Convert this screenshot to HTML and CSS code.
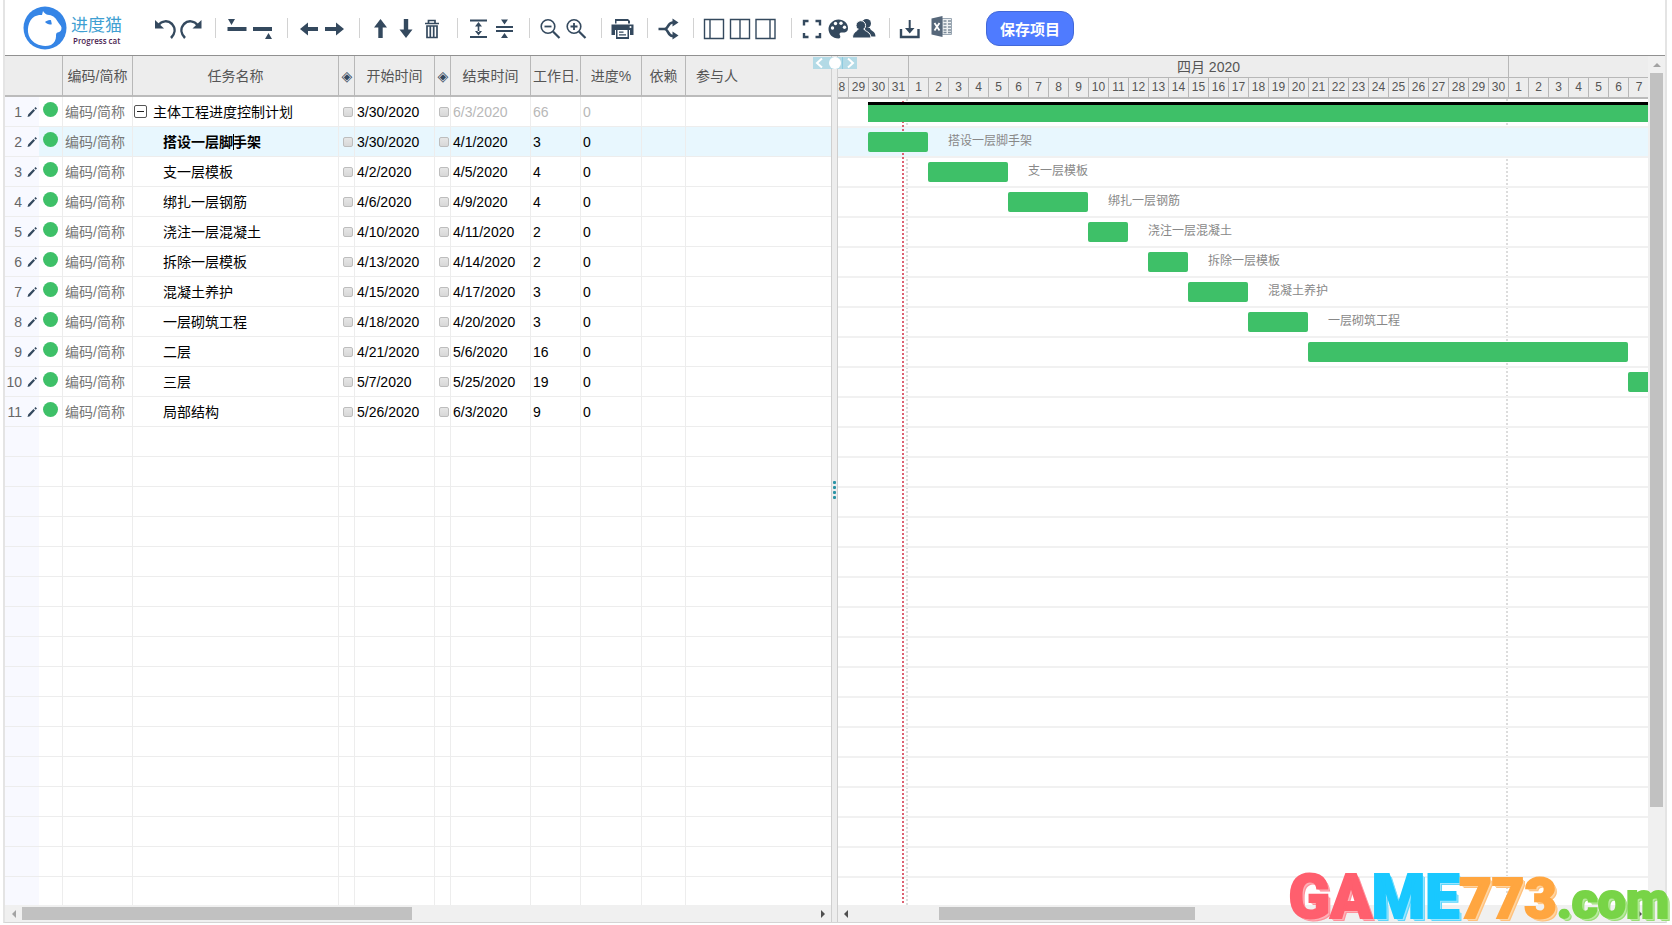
FILE: index.html
```html
<!DOCTYPE html>
<html lang="zh-CN">
<head>
<meta charset="utf-8">
<title>进度猫</title>
<link rel="stylesheet" href="styles.css">
</head>
<body>
<div class="app">
  <header class="toolbar">
    <a class="brand" href="#">
      <svg class="brand-mark" viewBox="0 0 44 44" aria-hidden="true">
        <circle cx="22" cy="22" r="21.5" fill="#3585e6"/>
        <path d="M20 5c1 1.500 2.500 3.200 4.500 3.800c4.500.3 8 2.500 9.800 6.200c1 2.200 3.700 4 4.200 6.500c.3 3-1.500 4.500-4 5c-1.500.5-1.500 2-1.500 4c0 3-1.500 6.500-5 8.500c-8 2.500-17-.5-21-7C3 25 5 14.500 11.500 10.500c2-1.200 5-1.800 7.500-1.500z" fill="#fff"/>
        <path d="M22 16c1.500-1 3.500-2.300 6-1.800l.8 4c-2.500.6-5 0-6.800-2.200z" fill="#3585e6"/>
      </svg>
      <span class="brand-words"><span class="brand-name">进度猫</span><span class="brand-sub">Progress cat</span></span>
    </a>
    <div class="group">
      <button class="tool" aria-label="撤销"><svg viewBox="0 0 26 26"><path d="M6 10.500C10 5.500 16 5 20 9c4 4.500 3 10-1 14" fill="none" stroke="#34495e" stroke-width="2.500"/><path d="M3 5v8.500h9z"/></svg></button>
      <button class="tool" aria-label="重做"><svg viewBox="0 0 26 26"><path d="M20 10.500C16 5.500 10 5 6 9c-4 4.500-3 10 1 14" fill="none" stroke="#34495e" stroke-width="2.500"/><path d="M23.500 5v8.500h-9z"/></svg></button>
    </div>
    <div class="group">
      <button class="tool" aria-label="在上方插入"><svg viewBox="0 0 26 26"><path d="M3.500 12h19v4h-19zM4 4h7l-3.500 6z"/></svg></button>
      <button class="tool" aria-label="在下方插入"><svg viewBox="0 0 26 26"><path d="M3 12h19v4H3zM15 24h7l-3.500-6z"/></svg></button>
    </div>
    <div class="group">
      <button class="tool" aria-label="升级"><svg viewBox="0 0 26 26"><path d="M4 14l8-6.500V12h10v4H12v4.500z"/></svg></button>
      <button class="tool" aria-label="降级"><svg viewBox="0 0 26 26"><path d="M22 14l-8-6.500V12H3v4h11v4.500z"/></svg></button>
    </div>
    <div class="group">
      <button class="tool" aria-label="上移"><svg viewBox="0 0 26 26"><path d="M12.500 4l6.500 8.500h-4.300V23h-4.400V12.500H6z"/></svg></button>
      <button class="tool" aria-label="下移"><svg viewBox="0 0 26 26"><path d="M12 23l6.500-8.500h-4.300V4H9.800v10.500H5.500z"/></svg></button>
      <button class="tool" aria-label="删除"><svg viewBox="0 0 26 26"><path d="M5 8.500h14M8.500 8V5.500h6.500V8M7 11v11.500h10V11zM10.300 11v11M13.700 11v11" fill="none" stroke="#34495e" stroke-width="1.700"/></svg></button>
    </div>
    <div class="group">
      <button class="tool" aria-label="展开"><svg viewBox="0 0 26 26"><path d="M4 4.500h17v2H4zM4 21h17v2H4zM12.500 7l3.500 4.500H9zM12.500 20.500L16 16H9zM11.700 11h1.600v6h-1.600z"/></svg></button>
      <button class="tool" aria-label="折叠"><svg viewBox="0 0 26 26"><path d="M4 11h17v2H4zM4 15h17v2H4zM9 4.500h7l-3.500 5zM9 23h7l-3.500-5z"/></svg></button>
    </div>
    <div class="group">
      <button class="tool" aria-label="缩小"><svg viewBox="0 0 26 26"><g fill="none" stroke="#34495e"><circle cx="10" cy="11.500" r="6.800" stroke-width="1.600"/><path d="M15 16.500L21.500 23" stroke-width="2.200"/><path d="M6.500 11.500h7" stroke-width="1.800"/></g></svg></button>
      <button class="tool" aria-label="放大"><svg viewBox="0 0 26 26"><g fill="none" stroke="#34495e"><circle cx="10" cy="11.500" r="6.800" stroke-width="1.600"/><path d="M15 16.500L21.500 23" stroke-width="2.200"/><path d="M6.500 11.500h7M10 8v7" stroke-width="1.800"/></g></svg></button>
    </div>
    <div class="group">
      <button class="tool" aria-label="打印"><svg viewBox="0 0 26 26"><path d="M5 4h13l2 2v2.500h-2V6H6.500v2.500H5zM1.500 9.500h22V20h-3.500v-5H5v5H1.500zM6 14.500h13V24H6z"/><path d="M7.500 15h10v7h-10z" fill="#fff"/><path d="M9 16.500h4.500v1.300H9zM9 19.300h7v1.300H9z"/><circle cx="20.500" cy="12" r="1" fill="#fff"/></svg></button>
    </div>
    <div class="group">
      <button class="tool" aria-label="依赖关系"><svg viewBox="0 0 26 26"><path d="M2.500 14h6c4 0 3-6 8-6.500h2M8.500 14c4 0 3 6.500 8 7h2" fill="none" stroke="#34495e" stroke-width="2.600"/><path d="M16.500 3.500l6 4-6 4zM16.500 16.500l6 4-6 4z"/></svg></button>
    </div>
    <div class="group">
      <button class="tool" aria-label="左栏"><svg viewBox="0 0 26 26"><path d="M2.500 4.500h19v19h-19zM8 4.500v19" fill="none" stroke="#34495e" stroke-width="1.400"/></svg></button>
      <button class="tool" aria-label="中栏"><svg viewBox="0 0 26 26"><path d="M2.500 4.500h19v19h-19zM12 4.500v19" fill="none" stroke="#34495e" stroke-width="1.400"/></svg></button>
      <button class="tool" aria-label="右栏"><svg viewBox="0 0 26 26"><path d="M2 4.500h19v19H2zM16 4.500v19" fill="none" stroke="#34495e" stroke-width="1.400"/></svg></button>
    </div>
    <div class="group">
      <button class="tool" aria-label="全屏"><svg viewBox="0 0 26 26"><path d="M4 10.500V6h4.500M15.500 6H20v4.500M20 18v4h-4.500M8.500 22H4v-4" fill="none" stroke="#34495e" stroke-width="2.400"/></svg></button>
      <button class="tool" aria-label="配色"><svg viewBox="0 0 26 26"><path d="M12.500 4.500c5.500 0 9.500 4 9.500 8.500c0 4-3 5-5.500 4.500c-3-.5-3.500 1-2.500 3c.7 1.500.3 3-1.500 3C6.500 23.500 2.500 19 2.500 14s4.500-9.500 10-9.500z"/><g fill="#fff"><circle cx="6.500" cy="13" r="1.700"/><circle cx="9.500" cy="8.500" r="1.700"/><circle cx="15" cy="8.300" r="1.700"/><circle cx="18.500" cy="12.200" r="1.700"/></g></svg></button>
      <button class="tool" aria-label="成员"><svg viewBox="0 0 26 26"><circle cx="14.500" cy="8.500" r="4.500"/><path d="M13 13h5c0 3 5.500 2.500 5.500 8.500H14z"/><g stroke="#fff"><circle cx="8.800" cy="10.500" r="4.800"/><path d="M6 14h6c.5 2.500 7 2.500 7 9H.5c0-6.500 5-6.500 5.500-9z"/></g><path d="M6.500 13h5v3h-5z"/></svg></button>
    </div>
    <div class="group">
      <button class="tool" aria-label="下载"><svg viewBox="0 0 26 26"><path d="M3 14v8h17.500v-8" fill="none" stroke="#34495e" stroke-width="2.400"/><path d="M10.700 5h2v8h3.800l-4.800 5.500L7 13h3.700z"/></svg></button>
      <button class="tool tool-excel" aria-label="导出 Excel"><svg viewBox="0 0 26 26"><path d="M12 3.500h9.500v16H12z" fill="#edf0f2" stroke="#9aa7b3" stroke-width="1"/><path d="M13.500 6h3M18 6h3M13.500 9h3M18 9h3M13.500 12h3M18 12h3M13.500 15h3M18 15h3M13.500 17.500h3M18 17.500h3" stroke="#7d8c9b" stroke-width="1.400"/><path d="M1.500 3.500l11-2.500v21l-11-2.500z" fill="#56677a"/><path d="M4.500 8l5 7.500M9.500 8l-5 7.500" stroke="#fff" stroke-width="1.800"/></svg></button>
    </div>
    <button class="save">保存项目</button>
  </header>

  <main class="workspace">
    <section class="pane pane-grid">
      <div class="pane-view">
        <table class="tasks">
          <colgroup><col class="c-index"><col class="c-dot"><col class="c-code"><col class="c-name"><col class="c-mark"><col class="c-date"><col class="c-mark"><col class="c-date"><col class="c-days"><col class="c-progress"><col class="c-dep"><col></colgroup>
          <thead>
            <tr><th colspan="2"></th><th>编码/简称</th><th>任务名称</th><th class="mark">◈</th><th>开始时间</th><th class="mark">◈</th><th>结束时间</th><th class="tight">工作日.</th><th>进度%</th><th>依赖</th><th class="people">参与人</th></tr>
          </thead>
          <tbody id="task-rows"></tbody>
        </table>
      </div>
      <div class="hscroll"><i class="arrow left dim"></i><div class="track"><div class="thumb thumb-grid"></div></div><i class="arrow right"></i></div>
    </section>

    <div class="splitter">
      <div class="handle">
        <svg viewBox="0 0 44 12"><path d="M0 0h44v12H0z" fill="#b3dae6"/><path d="M29.500 0v12" stroke="#8ecbe0"/><path d="M9 1.500L4 6l5 4.500M35 1.500L40 6l-5 4.500" fill="none" stroke="#fff" stroke-width="2"/><circle cx="22" cy="6" r="6" fill="#fff"/></svg>
      </div>
      <div class="grip"><i></i><i></i><i></i><i></i></div>
    </div>

    <section class="pane pane-chart">
      <div class="chart-main">
        <div class="pane-view">
          <div class="scale">
            <div class="months"><span class="m-mar"></span><span class="m-apr">四月 2020</span><span class="m-may"></span></div>
            <div class="days" id="days"></div>
          </div>
          <div class="canvas">
            <div class="marker month" style="--day:4"></div>
            <div class="marker month" style="--day:34"></div>
            <div class="marker today"></div>
            <div class="lanes" id="lanes"></div>
          </div>
        </div>
        <div class="vscroll"><i class="arrow up dim"></i><div class="vtrack"><div class="vthumb"></div></div><i class="arrow down"></i></div>
      </div>
      <div class="hscroll hscroll-chart"><i class="arrow left"></i><div class="track"><div class="thumb thumb-chart"></div></div><i class="arrow right"></i></div>
    </section>
  </main>
</div>
<div class="stamp"><span class="s-red">GA</span><span class="s-blue">ME</span><span class="s-orange">773</span><span class="s-green">.com</span></div>
<script src="app.js"></script>
</body>
</html>
```
FILE: styles.css
```css
* { box-sizing: border-box; }
body {
  margin: 0;
  height: 100vh;
  overflow: hidden;
  background: #fff;
  font-family: "Liberation Sans", "Noto Sans CJK SC", sans-serif;
  font-size: 14px;
  color: #000;
}
button { font: inherit; border: 0; background: none; padding: 0; cursor: pointer; }
.app {
  display: flex;
  flex-direction: column;
  height: calc(100vh - 2px);
  margin: 0 5px 0 3px;
  border: solid #e4e4e4;
  border-width: 0 2px;
  border-bottom: 1px solid #d4d4d4;
}

.toolbar {
  display: flex;
  align-items: center;
  flex: none;
  height: 56px;
  padding-left: 18px;
  border-bottom: 1px solid #919191;
}
.brand { display: flex; align-items: center; gap: 4px; width: 129px; text-decoration: none; }
.brand-mark { width: 44px; height: 44px; }
.brand-words { display: flex; flex-direction: column; padding-top: 6px; }
.brand-name { font-size: 17px; line-height: 20px; color: #3f9fd2; }
.brand-sub { font-family: "Open Sans", sans-serif; font-size: 8px; line-height: 10px; font-weight: 600; color: #4b1e50; padding-left: 2px; white-space: nowrap; }
.group { display: flex; align-items: center; }
.group + .group::before { content: ""; width: 1px; height: 20px; margin: 0 8px 0 11px; background: #d2d2d2; }
.tool { width: 26px; height: 26px; flex: none; }
.tool svg { display: block; width: 26px; height: 26px; fill: #34495e; }
.tool-excel { margin-left: 6px; }
.save {
  width: 88px;
  height: 35px;
  margin: 2px 0 0 30px;
  border: 1px solid #4268d8;
  border-radius: 13px;
  background: #4f7bff;
  color: #fff;
  font-size: 15px;
  font-weight: 700;
}

.workspace { display: flex; flex: 1; min-height: 0; }
.pane { display: flex; flex-direction: column; min-width: 0; }
.pane-grid { flex: 826 1 0; }
.pane-chart { flex: 827 1 0; }
.pane-view { flex: 1; min-width: 0; min-height: 0; overflow: hidden; }

.tasks { width: 100%; table-layout: fixed; border-collapse: separate; border-spacing: 0; }
.c-index { width: 34px; }
.c-dot { width: 24px; }
.c-code { width: 70px; }
.c-name { width: 206px; }
.c-mark { width: 16px; }
.c-date { width: 80px; }
.c-days { width: 50px; }
.c-progress { width: 61px; }
.c-dep { width: 44px; }
.tasks th {
  height: 41px;
  padding: 0;
  border-right: 1px solid #b8b8b8;
  border-bottom: 2px solid #bbb;
  background: #ededed;
  color: #555;
  font-weight: 400;
  line-height: 20px;
  white-space: nowrap;
}
.tasks th:last-child, .tasks td:last-child { border-right: 0; }
.tasks .mark { padding-left: 1px; font-family: "DejaVu Sans", sans-serif; color: #34495e; }
.tasks .tight { padding-left: 2px; text-align: left; }
.tasks .people { padding-left: 10px; text-align: left; }
.tasks td {
  height: 30px;
  padding: 0 2px;
  border-right: 1px solid #ededed;
  border-bottom: 1px solid #ededed;
  line-height: 20px;
  white-space: nowrap;
}
.tasks .index { border-right: 0; background: #f8f9ff; color: #666; padding: 0 2px 0 0; }
.index-in { display: flex; align-items: center; justify-content: flex-end; gap: 5px; }
.index-in svg { width: 10px; height: 10px; fill: #34495e; }
.dot { display: block; width: 15px; height: 15px; margin: 0 0 4px 2px; border-radius: 50%; background: #3ec068; }
.tasks .code { color: #777; }
.tasks .name { padding-left: 30px; }
.tasks .parent { padding-left: 1px; }
.parent-in { display: flex; align-items: center; gap: 6px; }
.toggle { position: relative; width: 13px; height: 13px; border: 1px solid #555; border-radius: 2px; }
.toggle::before { content: ""; position: absolute; left: 2px; top: 5px; width: 7px; height: 1px; background: #222; }
.caret { display: inline-block; width: 1px; height: 16px; margin-right: -1px; background: #000; vertical-align: -3px; }
.tasks .check { padding: 0 0 0 4px; }
.check input {
  display: block;
  appearance: none;
  width: 10px;
  height: 10px;
  margin: 0;
  border: 1px solid #bdbdbd;
  border-radius: 2px;
  background: linear-gradient(#e6e6e6, #d8d8d8);
}
.tasks .muted { color: #b8b8b8; }
.active td { background: #e8f7fe; }
.active .name { font-weight: 700; }

.splitter { position: relative; z-index: 3; flex: none; width: 7px; background: #ededed; border: solid #cfcfcf; border-width: 0 1px; }
.handle { position: absolute; left: -19px; top: 1px; width: 44px; height: 12px; }
.handle svg { display: block; }
.grip { position: absolute; left: 1px; top: calc(50% - 8px); display: grid; gap: 2px; }
.grip i { width: 3px; height: 3px; border-radius: 1px; background: #2b93a5; }

.chart-main { display: flex; flex: 1; min-height: 0; }
.scale { background: #ededed; color: #555; border-bottom: 2px solid #bbb; }
.months, .days, .lanes { margin-left: -9px; }
.months { display: flex; height: 22px; border-bottom: 1px solid #b8b8b8; font-size: 14px; line-height: 22px; text-align: center; }
.months span { flex: none; border-right: 1px solid #b8b8b8; }
.m-mar { width: 80px; }
.m-apr { width: 600px; }
.months .m-may { flex: 1; border-right: 0; }
.days { display: flex; height: 19px; font-size: 12px; line-height: 18px; text-align: center; }
.days span { flex: 0 0 20px; border-right: 1px solid #b8b8b8; }
.days span:last-child { border-right: 0; }
.canvas { position: relative; margin-top: -1px; height: 100%; }
.marker { position: absolute; top: 1px; bottom: 0; width: 2px; }
.month { left: calc(var(--day) * 20px - 12px); background: repeating-linear-gradient(#dcdcdc 0 2px, transparent 2px 4px); }
.today { left: 64px; top: 3px; z-index: 1; background: repeating-linear-gradient(#dd6272 0 2px, transparent 2px 4px); }
.lane { position: relative; display: flex; height: 30px; padding-top: 4px; border-bottom: 2px solid #f1f1f1; }
.lane.active { background: #e8f7fe; }
.bar { position: relative; z-index: 2; flex: none; height: 20px; margin-left: -1px; border-radius: 2px; background: #3ec068; }
.bar.summary { border-top: 3px solid #000; border-radius: 0; }
.bar-label { padding-left: 20px; font-size: 12px; line-height: 18px; color: #888; white-space: nowrap; }

.hscroll { display: flex; align-items: center; flex: none; height: 17px; background: #f0f0f0; }
.hscroll-chart { padding-right: 17px; }
.hscroll-chart .left { width: 15px; }
.track { flex: 1; }
.thumb { height: 13px; background: #c1c1c1; }
.thumb-grid { width: 49.2%; }
.thumb-chart { margin-left: 11%; width: 33%; }
.vscroll { display: flex; flex-direction: column; align-items: center; flex: none; width: 17px; background: #f0f0f0; }
.vtrack { flex: 1; }
.vthumb { width: 13px; height: 90%; background: #c1c1c1; }
.arrow { flex: none; width: 17px; height: 17px; display: grid; place-items: center; color: #505050; }
.arrow::before { content: ""; border: 4px solid transparent; }
.arrow.dim { color: #a3a3a3; }
.arrow.left::before { border-right-color: currentColor; border-left: 0; }
.arrow.right::before { border-left-color: currentColor; border-right: 0; }
.arrow.up::before { border-bottom-color: currentColor; border-top: 0; }
.arrow.down::before { border-top-color: currentColor; border-bottom: 0; }

.stamp {
  position: absolute;
  z-index: 5;
  right: 3px;
  bottom: 2px;
  display: flex;
  align-items: baseline;
  font-family: Roboto, sans-serif;
  font-weight: 900;
  font-size: 61px;
  line-height: 44px;
  -webkit-text-stroke-width: 2px;
}
.s-red { color: #ff5f6e; text-shadow: 1px 1px #ffb0b7, 2px 2px #ffb0b7, 3px 3px #ff8f9a; }
.s-blue { color: #19c8ff; text-shadow: 1px 1px #9be6ff, 2px 2px #9be6ff, 3px 3px #5fd6fb; }
.s-orange { color: #ffa640; font-size: 56px; text-shadow: 1px 1px #ffd5a2, 2px 2px #ffd5a2, 3px 3px #ffc17c; }
.s-green { color: #78d447; font-size: 50px; text-shadow: 1px 1px #b9ea9f, 2px 2px #b9ea9f, 3px 3px #98de75; }
```
FILE: app.js
```js
const ROWS = 27;
const VISIBLE_DAYS = 41;

// name, start, end, working days, first day column, length in days
const tasks = [
  ["主体工程进度控制计划", "3/30/2020", "6/3/2020", 66, 2, 66],
  ["搭设一层脚手架", "3/30/2020", "4/1/2020", 3, 2, 3],
  ["支一层模板", "4/2/2020", "4/5/2020", 4, 5, 4],
  ["绑扎一层钢筋", "4/6/2020", "4/9/2020", 4, 9, 4],
  ["浇注一层混凝土", "4/10/2020", "4/11/2020", 2, 13, 2],
  ["拆除一层模板", "4/13/2020", "4/14/2020", 2, 16, 2],
  ["混凝土养护", "4/15/2020", "4/17/2020", 3, 18, 3],
  ["一层砌筑工程", "4/18/2020", "4/20/2020", 3, 21, 3],
  ["二层", "4/21/2020", "5/6/2020", 16, 24, 16],
  ["三层", "5/7/2020", "5/25/2020", 19, 40, 19],
  ["局部结构", "5/26/2020", "6/3/2020", 9, 59, 9]
];

const pencil = '<svg viewBox="0 0 10 10"><path d="M.5 10l.8-2.800 5.200-5.200 1.500 1.500L2.800 9.200zM7.300 1.300L8.500 0 10 1.500 8.700 2.700z"/></svg>';
const check = label => `<td class="check"><input type="checkbox" aria-label="${label}"></td>`;

function nameCell(name, i) {
  if (i === 0) {
    return `<td class="name parent"><div class="parent-in"><button class="toggle" aria-label="折叠"></button>${name}</div></td>`;
  }
  const text = i === 1 ? `${name.slice(0, 5)}<i class="caret"></i>${name.slice(5)}` : name;
  return `<td class="name">${text}</td>`;
}

let grid = "";
let lanes = "";
for (let i = 0; i < ROWS; i++) {
  const t = tasks[i];
  const active = i === 1 ? " active" : "";
  if (!t) {
    grid += `<tr><td class="index"></td>${"<td></td>".repeat(11)}</tr>`;
    lanes += '<div class="lane"></div>';
    continue;
  }
  const [name, start, end, days, from, length] = t;
  const muted = i === 0 ? ' class="muted"' : "";
  grid += `<tr class="row${active}"><td class="index"><div class="index-in">${i + 1}${pencil}</div></td>
    <td><span class="dot"></span></td><td class="code">编码/简称</td>${nameCell(name, i)}
    ${check("开始里程碑")}<td>${start}</td>${check("结束里程碑")}<td${muted}>${end}</td>
    <td${muted}>${days}</td><td${muted}>0</td><td></td><td></td></tr>`;
  const label = i > 0 && i < 8 ? `<span class="bar-label">${name}</span>` : "";
  lanes += `<div class="lane${active}" style="padding-left:${from * 20}px"><div class="bar${i ? "" : " summary"}" style="width:${length * 20}px"></div>${label}</div>`;
}
document.getElementById("task-rows").innerHTML = grid;
document.getElementById("lanes").innerHTML = lanes;

let cells = "";
for (let d = 0; d < VISIBLE_DAYS; d++) {
  cells += `<span>${new Date(2020, 2, 28 + d).getDate()}</span>`;
}
document.getElementById("days").innerHTML = cells;
```
